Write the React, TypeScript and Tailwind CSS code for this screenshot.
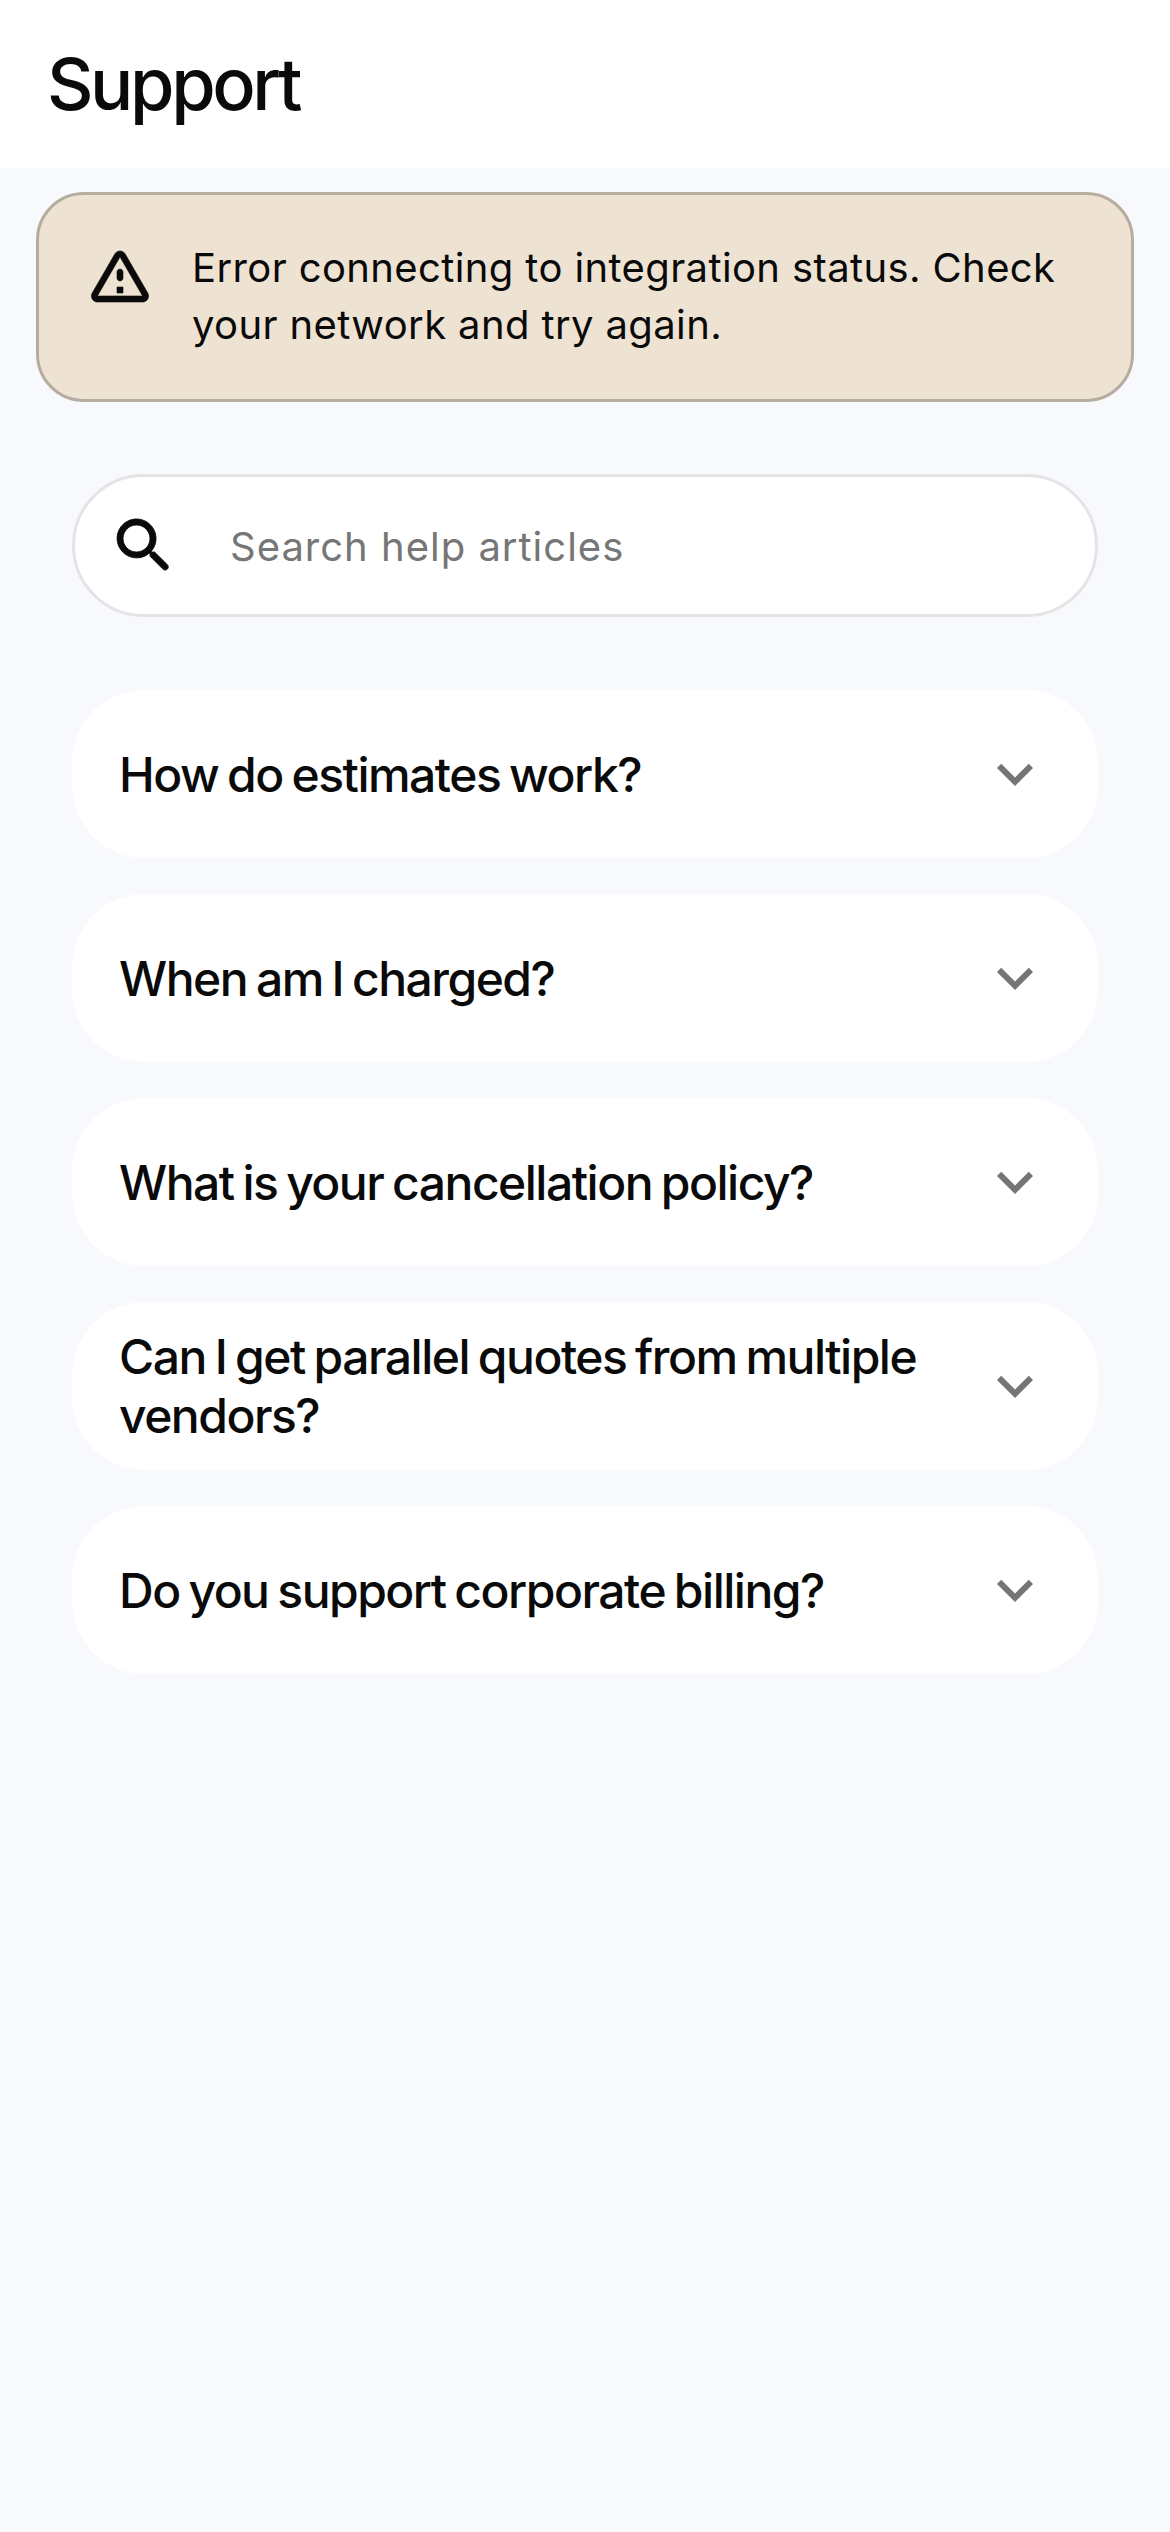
import React from "react";

const questions = [
  "How do estimates work?",
  "When am I charged?",
  "What is your cancellation policy?",
  "Can I get parallel quotes from multiple vendors?",
  "Do you support corporate billing?",
];

const App = () => {
  return (
    <div className="min-h-[2532px] bg-[#f8f9fd] font-['Inter',sans-serif]">
      {/* Header */}
      <div className="h-[168px] bg-white pl-[47px] flex items-center">
        <h1 className="text-[72px] leading-none font-medium tracking-[-3.4px] text-[#0a0a0a]">Support</h1>
      </div>

      <div className="px-[36px] pt-[24px]">
        {/* Error banner */}
        <div className="flex items-start rounded-[48px] border-[3px] border-[#b6ada0] bg-[#eee2d2] pl-[45px] pr-[60px] pt-[44px] pb-[46px]">
          <svg viewBox="0 0 24 24" className="w-[72px] h-[72px] shrink-0 text-[#0a0a0a]" fill="currentColor" stroke="currentColor" strokeWidth="0.2">
            <path d="M12 5.99 19.53 19H4.47L12 5.99M2.74 18c-.77 1.33.19 3 1.73 3h15.06c1.54 0 2.5-1.67 1.73-3L13.73 4.99c-.77-1.33-2.69-1.33-3.46 0L2.74 18zM11 11v2c0 .55.45 1 1 1s1-.45 1-1v-2c0-.55-.45-1-1-1s-1 .45-1 1zm0 5h2v2h-2z" />
          </svg>
          <p className="ml-[36px] text-[40px] leading-[57px] tracking-[0.38px] text-[#0a0a0a]">
            Error connecting to integration status. Check your network and try again.
          </p>
        </div>

        <div className="px-[36px] pt-[72px]">
          {/* Search */}
          <div className="h-[143px] flex items-center rounded-full border-[3px] border-[#e4e4e6] bg-white pl-[33px]">
            <svg viewBox="0 0 24 24" className="w-[72px] h-[72px] shrink-0 text-[#0a0a0a]" fill="currentColor" stroke="currentColor" strokeWidth="0.3">
              <path d="M15.5 14h-.79l-.28-.27c1.2-1.4 1.82-3.31 1.48-5.34-.47-2.78-2.79-5-5.59-5.34-4.2-.52-7.75 3.02-7.23 7.22.34 2.8 2.56 5.12 5.34 5.59 2.03.34 3.94-.28 5.34-1.48l.27.28v.79l4.25 4.25c.41.41 1.08.41 1.49 0 .41-.41.41-1.08 0-1.49L15.5 14zm-6 0C7.01 14 5 11.99 5 9.5S7.01 5 9.5 5 14 7.01 14 9.5 11.99 14 9.5 14z" />
            </svg>
            <span className="ml-[50px] mt-[2px] text-[40px] tracking-[1px] text-[#767676]">Search help articles</span>
          </div>

          {/* FAQ list */}
          <div className="mt-[73px] flex flex-col gap-[36px]">
            {questions.map((q) => (
              <div key={q} className="h-[168px] flex items-center justify-between rounded-[72px] bg-white pl-[47px] pr-[47px]">
                <span className="w-[850px] text-[48px] leading-[59px] font-medium tracking-[-1.5px] [word-spacing:-2.5px] text-[#0a0a0a]">{q}</span>
                <svg viewBox="0 0 24 24" className="w-[72px] h-[72px] shrink-0 text-[#757575]" fill="currentColor">
                  <path d="M16.59 8.59 12 13.17 7.41 8.59 6 10l6 6 6-6z" />
                </svg>
              </div>
            ))}
          </div>
        </div>
      </div>
    </div>
  );
};

export default App;
